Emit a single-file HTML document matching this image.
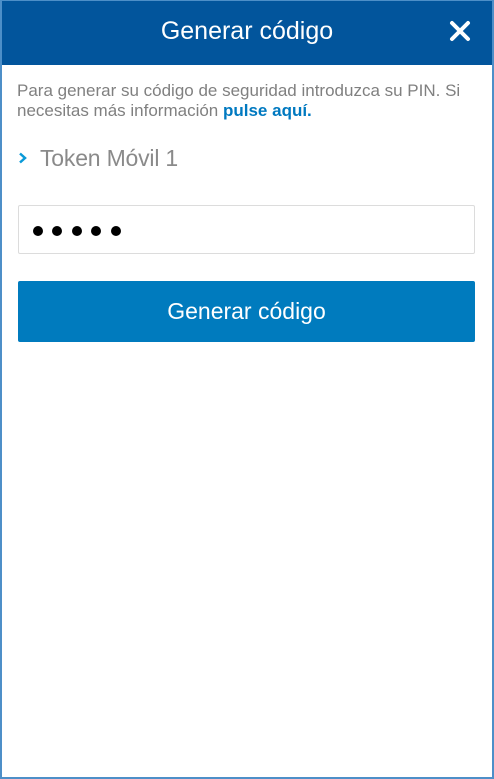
<!DOCTYPE html>
<html><head><meta charset="utf-8"><style>
*{margin:0;padding:0;box-sizing:border-box}
html,body{width:494px;height:779px;overflow:hidden;background:#fff;font-family:"Liberation Sans",sans-serif}
.frame{position:absolute;left:0;top:0;width:494px;height:779px;border:2px solid #4d8fc8;border-top:1px solid #4d8fc8}
.hdr{position:absolute;left:0;top:0;width:494px;height:65px;background:#02559c;color:#fff;font-size:25px;text-align:center;line-height:63px}
.x{position:absolute;left:449px;top:20px}
.p{position:absolute;left:17px;top:81px;width:474px;font-size:17px;line-height:20px;color:#808080}
.p b{color:#0079c0}
.tok{position:absolute;left:40px;top:145px;font-size:23px;color:#8a8a8a;letter-spacing:-0.2px}
.chev{position:absolute;left:18px;top:152px}
.inp{position:absolute;left:18px;top:205px;width:457px;height:49px;border:1px solid #dcdcdc;border-radius:2px}
.dot{position:absolute;top:20px;width:10px;height:10px;border-radius:50%;background:#000}
.btn{position:absolute;left:18px;top:281px;width:457px;height:61px;background:#007bbe;border-radius:2px;color:#fff;font-size:23px;text-align:center;line-height:60px}
</style></head><body>
<div class="hdr">Generar código</div>
<svg class="x" width="22" height="22" viewBox="0 0 22 22"><path d="M3 3L19 19M19 3L3 19" stroke="#fff" stroke-width="4" stroke-linecap="round"/></svg>
<div class="p">Para generar su código de seguridad introduzca su PIN. Si necesitas más información <b>pulse aquí.</b></div>
<svg class="chev" width="10" height="12" viewBox="0 0 10 12"><path d="M2 1.5L7 6L2 10.5" fill="none" stroke="#0a9ad8" stroke-width="2.5"/></svg>
<div class="tok">Token Móvil 1</div>
<div class="inp">
<div class="dot" style="left:14px"></div><div class="dot" style="left:33px"></div><div class="dot" style="left:53px"></div><div class="dot" style="left:72px"></div><div class="dot" style="left:92px"></div>
</div>
<div class="btn">Generar código</div>
<div class="frame"></div>
</body></html>
